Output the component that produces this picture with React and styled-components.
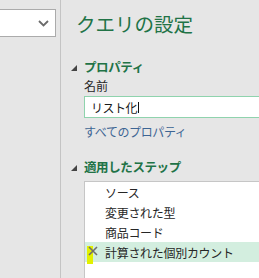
import React from "react";
import styled, { createGlobalStyle } from "styled-components";

const Global = createGlobalStyle`
  html, body { margin: 0; padding: 0; }
  body {
    background: #e6e6e6;
    font-family: "Noto Sans CJK JP", "Noto Sans", sans-serif;
    color: #262626;
  }
`;

const Root = styled.div`
  display: flex;
  height: 278px;
  overflow: hidden;
  background: #e6e6e6;
`;

const LeftPane = styled.div`
  width: 60px;
  flex: none;
  padding-top: 9px;
  overflow: hidden;
`;

const Dropdown = styled.div`
  box-sizing: border-box;
  margin-left: -10px;
  width: 66px;
  height: 28px;
  background: #fff;
  border: 1px solid #ababab;
  display: flex;
  align-items: center;
  justify-content: flex-end;
  padding-right: 6px;
`;

const Divider = styled.div`
  width: 1px;
  flex: none;
  background: #c4c4c4;
`;

const RightPane = styled.div`
  flex: 1;
  min-width: 0;
  padding-left: 10px;
  display: flex;
  flex-direction: column;
`;

const Title = styled.div`
  margin: 12px 0 0 5px;
  font-size: 19.5px;
  line-height: 24px;
  color: #217346;
  white-space: nowrap;
`;

const SectionHeader = styled.div`
  display: flex;
  align-items: center;
  height: 14px;
  margin-top: ${(p) => p.$mt}px;
  gap: 7px;
  font-size: 12.5px;
  font-weight: 700;
  color: #217346;
  white-space: nowrap;
  letter-spacing: -0.4px;
`;

const Tri = styled.span`
  width: 0;
  height: 0;
  border-left: 6px solid transparent;
  border-bottom: 6px solid #444;
  margin-top: 3px;
`;

const Content = styled.div`
  padding-left: 13px;
  display: flex;
  flex-direction: column;
`;

const Label = styled.div`
  margin-top: 5px;
  font-size: 12px;
  line-height: 16px;
  color: #262626;
`;

const Input = styled.div`
  box-sizing: border-box;
  margin-top: 2px;
  width: calc(100% + 20px);
  height: 22px;
  background: #fff;
  border: 1px solid #8fd3ad;
  padding-left: 6px;
  display: flex;
  align-items: center;
  font-size: 12px;
  color: #1a1a1a;
  letter-spacing: -0.5px;
`;

const Caret = styled.span`
  display: inline-block;
  width: 1px;
  height: 11px;
  background: #111;
  margin-left: 1px;
`;

const Link = styled.div`
  margin-top: 6px;
  font-size: 12px;
  line-height: 16px;
  color: #3d6594;
  letter-spacing: -0.4px;
  white-space: nowrap;
`;

const StepsBox = styled.div`
  margin-top: 8px;
  width: calc(100% + 20px);
  flex: 1;
  background: #fff;
  border-top: 1px solid #c6c6c6;
  border-left: 1px solid #c6c6c6;
`;

const StepRow = styled.div`
  position: relative;
  display: grid;
  grid-template-columns: 20px 1fr;
  align-items: center;
  height: 20px;
  font-size: 12px;
  color: #262626;
  white-space: nowrap;
  letter-spacing: -0.3px;
  background: ${(p) => (p.$selected ? "#d3eedf" : "transparent")};
`;

const IconCell = styled.span`
  position: relative;
  height: 20px;
  display: flex;
  align-items: center;
`;

const Highlight = styled.span`
  position: absolute;
  left: 2px;
  top: 4px;
  width: 6px;
  height: 18px;
  background: #e2f000;
`;

const XIcon = styled.svg`
  position: relative;
  margin-left: 3px;
  margin-top: -2px;
`;

const steps = ["ソース", "変更された型", "商品コード", "計算された個別カウント"];

export default function App() {
  return (
    <>
      <Global />
      <Root>
        <LeftPane>
          <Dropdown>
            <svg width="11" height="7" viewBox="0 0 11 7">
              <path d="M1 1 L5.5 5.5 L10 1" fill="none" stroke="#6b6b6b" strokeWidth="1.8" />
            </svg>
          </Dropdown>
        </LeftPane>
        <Divider />
        <RightPane>
          <Title>クエリの設定</Title>
          <SectionHeader $mt={23}>
            <Tri />
            プロパティ
          </SectionHeader>
          <Content>
            <Label>名前</Label>
            <Input>
              リスト化
              <Caret />
            </Input>
            <Link>すべてのプロパティ</Link>
          </Content>
          <SectionHeader $mt={19}>
            <Tri />
            適用したステップ
          </SectionHeader>
          <Content style={{ flex: 1 }}>
            <StepsBox>
              {steps.map((s, i) => {
                const selected = i === steps.length - 1;
                return (
                  <StepRow key={s} $selected={selected}>
                    <IconCell>
                      {selected && (
                        <>
                          <Highlight />
                          <XIcon width="10" height="10" viewBox="0 0 10 10">
                            <path d="M1 1 L9 9 M9 1 L1 9" stroke="#6e6e6e" strokeWidth="1.6" />
                          </XIcon>
                        </>
                      )}
                    </IconCell>
                    <span>{s}</span>
                  </StepRow>
                );
              })}
            </StepsBox>
          </Content>
        </RightPane>
      </Root>
    </>
  );
}
